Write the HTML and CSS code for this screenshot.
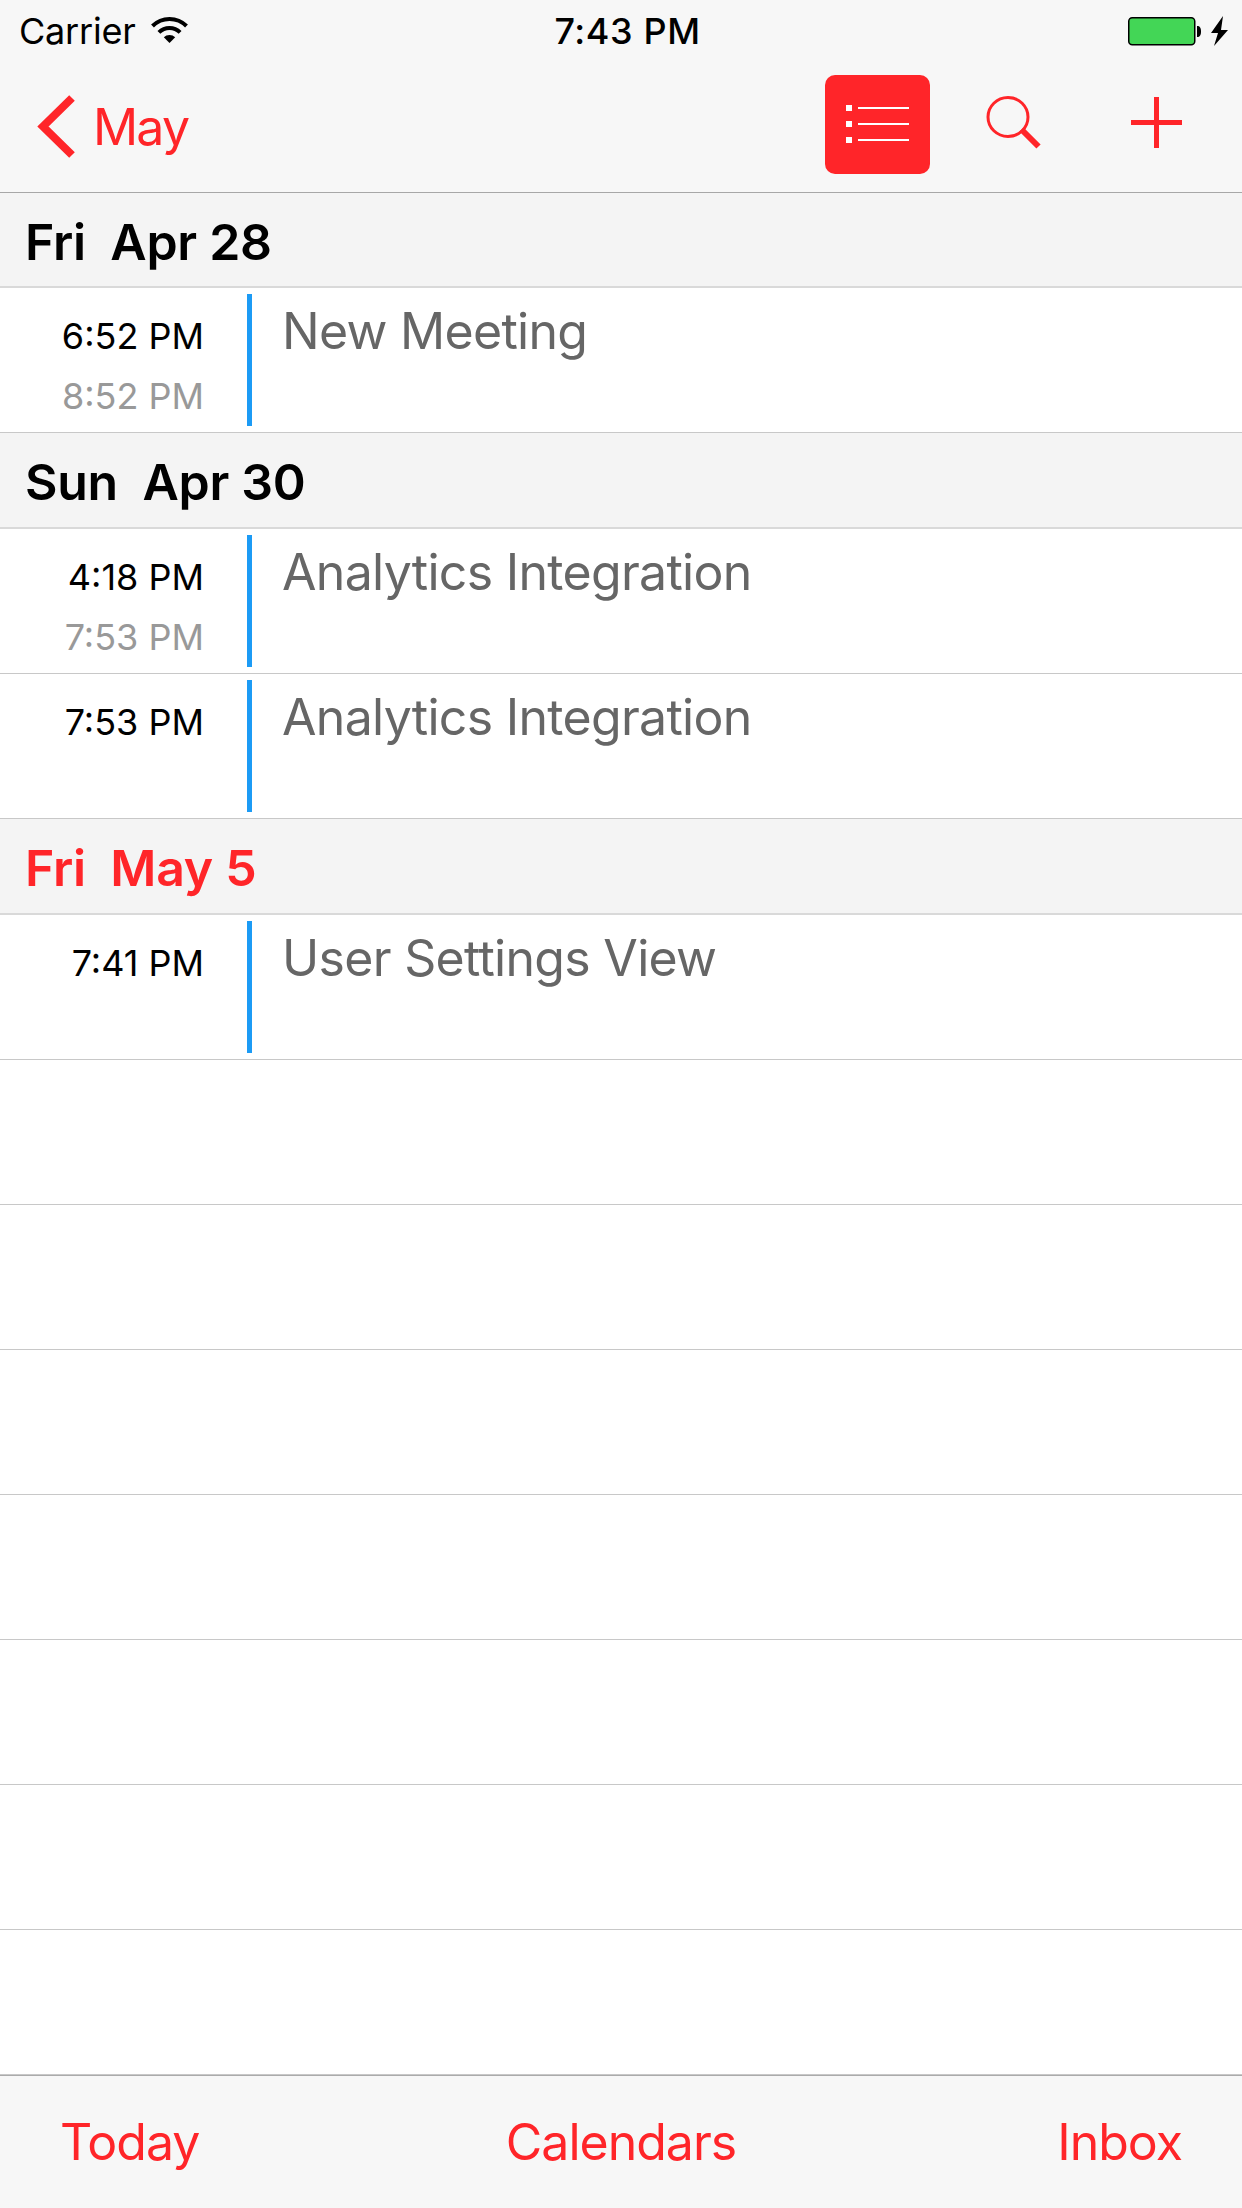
FILE: index.html
```html
<!DOCTYPE html>
<html lang="en">
<head>
  <meta charset="UTF-8">
  <title>Calendar list</title>
  <link rel="stylesheet" href="styles.css">
</head>
<body>
  <div class="app">
    <header class="head">
      <div class="status">
        <div class="status-left">
          <span>Carrier</span>
          <svg class="wifi" width="37" height="27" viewBox="0 0 37 27">
            <path d="M1.5 10A24 24 0 0 1 35.5 10" fill="none" stroke="#000" stroke-width="4"/>
            <path d="M7.9 16.4A15 15 0 0 1 29.1 16.4" fill="none" stroke="#000" stroke-width="4"/>
            <path d="M18.5 27L12.8 21.3A8 8 0 0 1 24.2 21.3Z" fill="#000"/>
          </svg>
        </div>
        <div class="status-time">7:43 PM</div>
        <svg class="battery" width="100" height="30" viewBox="0 0 100 30">
          <rect x="0.75" y="1.75" width="66" height="27" rx="3.5" fill="#43d656" stroke="#000" stroke-width="1.5"/>
          <path d="M69 10C72 10 73 12 73 15.5C73 19 72 21 69 21Z" fill="#000"/>
          <polygon points="95,0 83,17 90,17 86,30 100,14 93,14" fill="#000"/>
        </svg>
      </div>
      <nav class="nav">
        <a class="back">
          <svg class="chevron" width="38" height="63" viewBox="0 0 38 63">
            <path d="M35 3L6 31.500L35 60" fill="none" stroke="#ff2529" stroke-width="8"/>
          </svg>
          <span>May</span>
        </a>
        <div class="nav-actions">
          <svg class="list-btn" width="105" height="99" viewBox="0 0 105 99">
            <rect width="105" height="99" rx="10" fill="#ff2529"/>
            <g fill="#fff">
              <rect x="21" y="30" width="6" height="6"/>
              <rect x="21" y="46" width="6" height="6"/>
              <rect x="21" y="62" width="6" height="6"/>
              <rect x="33" y="32" width="51" height="2"/>
              <rect x="33" y="48" width="51" height="2"/>
              <rect x="33" y="64" width="51" height="2"/>
            </g>
          </svg>
          <svg class="search-btn" width="57" height="53" viewBox="0 0 57 53">
            <ellipse cx="23" cy="21" rx="20" ry="19.500" fill="none" stroke="#ff2529" stroke-width="3"/>
            <path d="M36.500 33.500L53.500 50.500" fill="none" stroke="#ff2529" stroke-width="6"/>
          </svg>
          <svg class="add-btn" width="51" height="51" viewBox="0 0 51 51">
            <path d="M23 0h5v23h23v5H28v23h-5V28H0v-5h23z" fill="#ff2529"/>
          </svg>
        </div>
      </nav>
    </header>

    <main class="list">
      <div class="day">Fri  Apr 28</div>
      <div class="row">
        <div class="times">
          <div>6:52 PM</div>
          <div class="end">8:52 PM</div>
        </div>
        <div class="bar"></div>
        <div class="title">New Meeting</div>
      </div>

      <div class="day">Sun  Apr 30</div>
      <div class="row">
        <div class="times">
          <div>4:18 PM</div>
          <div class="end">7:53 PM</div>
        </div>
        <div class="bar"></div>
        <div class="title">Analytics Integration</div>
      </div>
      <div class="row">
        <div class="times">
          <div>7:53 PM</div>
        </div>
        <div class="bar"></div>
        <div class="title">Analytics Integration</div>
      </div>

      <div class="day today">Fri  May 5</div>
      <div class="row">
        <div class="times">
          <div>7:41 PM</div>
        </div>
        <div class="bar"></div>
        <div class="title">User Settings View</div>
      </div>

      <div class="row"></div>
      <div class="row"></div>
      <div class="row"></div>
      <div class="row"></div>
      <div class="row"></div>
      <div class="row"></div>
      <div class="row"></div>
    </main>

    <footer class="tabs">
      <a class="tab-left">Today</a>
      <a>Calendars</a>
      <a class="tab-right">Inbox</a>
    </footer>
  </div>
</body>
</html>
```

FILE: styles.css
```css
* {
  box-sizing: border-box;
}
body {
  margin: 0;
  font-family: Inter, Roboto, "Liberation Sans", sans-serif;
  background: #fff;
  color: #000;
}

.app {
  display: flex;
  flex-direction: column;
  height: 2208px;
  overflow: hidden;
}

.head {
  height: 193px;
  background: #f7f7f7;
  border-bottom: 1px solid #a7a7a7;
}

.status {
  display: grid;
  grid-template-columns: 1fr auto 1fr;
  align-items: center;
  height: 61px;
  padding: 0 14px 0 19px;
  font-size: 36px;
  line-height: 60px;
}
.status-left {
  display: flex;
  align-items: center;
  gap: 15px;
  letter-spacing: -0.2px;
}
.wifi {
  margin-top: -2px;
}
.status-time {
  margin-left: 8px;
  font-weight: 500;
  letter-spacing: 0.6px;
}
.battery {
  justify-self: end;
}

.nav {
  display: flex;
  align-items: center;
  justify-content: space-between;
  height: 131px;
  padding: 0 60px 0 37px;
}
.back {
  display: flex;
  align-items: center;
  gap: 18px;
  font-size: 50px;
  letter-spacing: -1.8px;
  color: #ff2529;
}
.nav-actions {
  display: flex;
  align-items: center;
  padding-bottom: 4px;
}
.search-btn {
  margin: 0 89px 4px 55px;
}
.add-btn {
  margin-bottom: 4px;
}

.day {
  height: 96px;
  padding: 3px 0 0 25px;
  background: #f4f4f4;
  border-bottom: 2px solid #d9d9d9;
  font-size: 50px;
  font-weight: 600;
  line-height: 92px;
  letter-spacing: -0.3px;
  white-space: pre;
}
.day:first-child {
  height: 95px;
}
.today {
  color: #ff2529;
}

.row {
  display: flex;
  height: 145px;
  padding: 6px 0;
  border-bottom: 1px solid #c8c8c8;
}
.times {
  width: 204px;
  margin-right: 43px;
  padding-top: 12px;
  font-size: 36px;
  line-height: 60px;
  text-align: right;
}
.end {
  color: #999;
}
.bar {
  width: 5px;
  background: #1c9bf5;
}
.title {
  margin-left: 30px;
  padding-top: 7px;
  font-size: 50px;
  line-height: 60px;
  letter-spacing: -0.7px;
  color: #666;
}

.list {
  flex: 1;
}

.tabs {
  display: grid;
  grid-template-columns: 1fr auto 1fr;
  align-items: center;
  height: 133px;
  padding: 0 60px;
  background: #f7f7f7;
  border-top: 1px solid #ababab;
  font-size: 50px;
  letter-spacing: -1px;
  color: #ff2529;
}
.tab-right {
  justify-self: end;
}
```
